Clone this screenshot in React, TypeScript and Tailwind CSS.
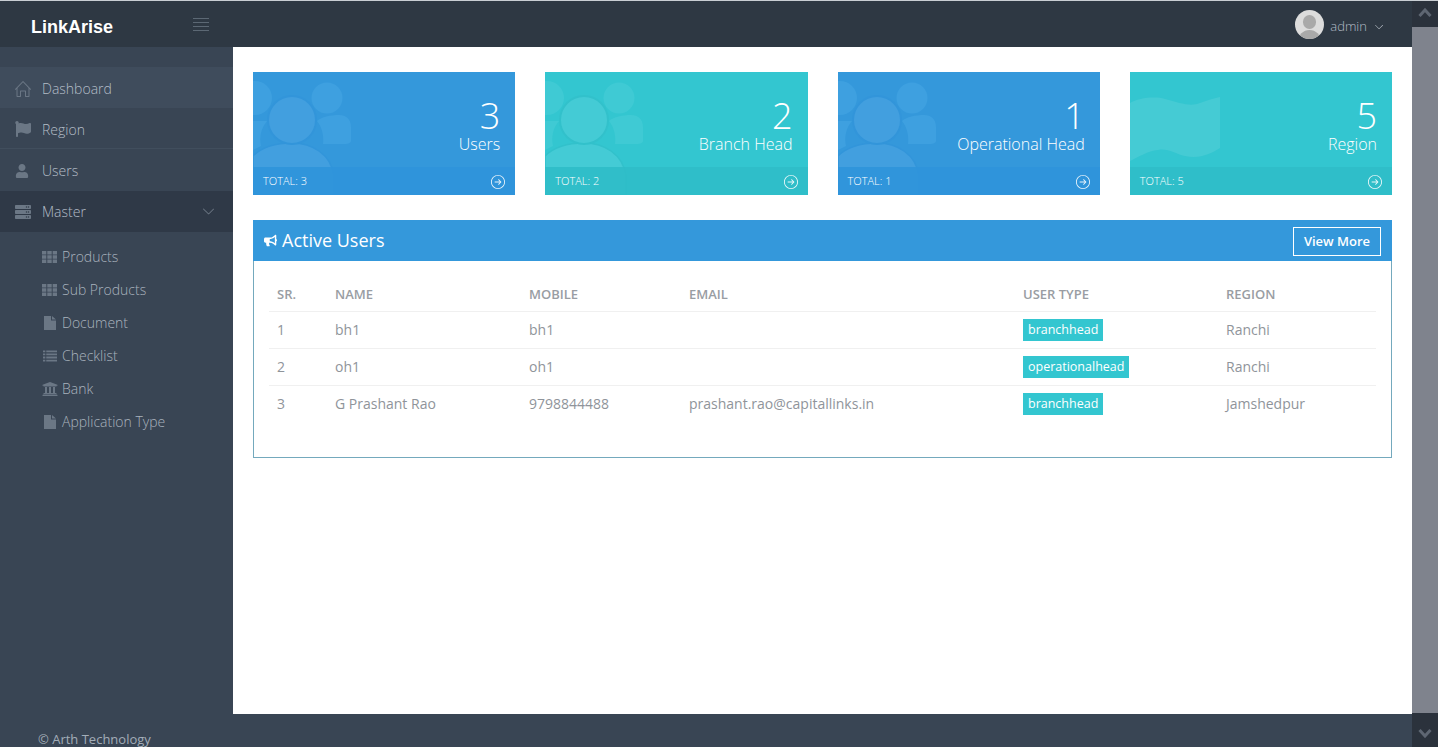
import React from "react";
import { FaFlag, FaUser, FaServer, FaUniversity, FaBullhorn } from "react-icons/fa";
import { SlHome, SlArrowDown, SlArrowRightCircle } from "react-icons/sl";

const font = "font-['Open_Sans',sans-serif]";

function UsersBg({ blue }: { blue?: boolean }) {
  const ring = blue ? "#3295da" : "#32c1cb";
  const head = blue ? "#429fdf" : "#44cbd5";
  const side = blue ? "#3ea0e0" : "#3fcad4";
  return (
    <svg viewBox="0 0 100 123" className="absolute left-0 top-0 h-[123px] w-[100px]">
      <g fill={side}>
        <circle cx="74" cy="26" r="15.500" />
        <circle cx="2" cy="26" r="17" />
        <path d="M64 49c4-4 14-6 22-6 7 0 12 4 12 12v14c0 2-3 3-6 3H70c1-8-1-17-6-23z" />
        <path d="M0 49h14c-6 7-8 16-6 25l-8 4z" />
      </g>
      <path d="M0 84c8-8 22-13 39-13 20 0 39 11 42 33v19H0z" fill={head} stroke={ring} strokeWidth="1.500" />
      <circle cx="39" cy="48" r="24" fill={head} stroke={ring} strokeWidth="2" />
    </svg>
  );
}

function FlagBg() {
  return (
    <svg viewBox="0 0 100 123" className="absolute left-0 top-0 h-[123px] w-[100px]" fill="#ffffff">
      <path opacity="0.09" d="M0 31C8 26 25 24 35 27c15 4 25 8 35 4 8-3 15-5 20-6v51c-10 6-20 11-35 8-10-2-17-8-27-6C18 79 8 85 0 89z" />
    </svg>
  );
}

function Card({ n, label, blue, flag }: { n: number; label: string; blue?: boolean; flag?: boolean }) {
  return (
    <div className={`relative h-[123px] overflow-hidden text-white ${blue ? "bg-[#3498db]" : "bg-[#33c6d0]"}`}>
      {flag ? <FlagBg /> : <UsersBg blue={blue} />}
      <div className="relative flex h-[95px] flex-col items-end pr-[15px] pt-[24px]">
        <div className="text-[36px] font-light leading-[40px]">{n}</div>
        <div className="text-[16px] font-light leading-[16px]">{label}</div>
      </div>
      <div className={`relative flex h-[28px] items-center justify-between pl-[10px] pr-[10px] pt-[1px] ${blue ? "bg-[#2f93da]/90" : "bg-[#2fbcc8]/90"}`}>
        <span className="text-[11px] font-light">TOTAL: {n}</span>
        <SlArrowRightCircle className="text-[14px] opacity-90" />
      </div>
    </div>
  );
}

function NavItem({ icon, label, cls, chev }: { icon: React.ReactNode; label: string; cls?: string; chev?: boolean }) {
  return (
    <div className={`flex h-[41px] items-center pl-[15px] pr-[19px] text-[14px] font-light text-[#b4bdc7] ${cls ?? ""}`}>
      <span className="flex w-[27px] items-center text-[16px] text-[#6b7785]">{icon}</span>
      <span className="flex-1">{label}</span>
      {chev && <SlArrowDown className="text-[11px] text-[#77828f]" />}
    </div>
  );
}

function SubItem({ icon, label }: { icon: React.ReactNode; label: string }) {
  return (
    <div className="flex h-[33px] items-center pl-[42px] text-[14px] font-light text-[#a9b3be]">
      <span className="flex w-[20px] items-center text-[15px] text-[#6b7785]">{icon}</span>
      <span>{label}</span>
    </div>
  );
}

function GridIcon() {
  return (
    <svg viewBox="0 0 15 12" className="h-[12px] w-[15px]" fill="currentColor">
      <path d="M0 0h4.300v3.400H0zM5.300 0h4.400v3.400H5.300zM10.700 0H15v3.400h-4.300zM0 4.300h4.300v3.400H0zM5.300 4.300h4.400v3.400H5.300zM10.700 4.300H15v3.400h-4.300zM0 8.600h4.300V12H0zM5.300 8.600h4.400V12H5.300zM10.700 8.600H15V12h-4.300z" />
    </svg>
  );
}

function DocIcon() {
  return (
    <svg viewBox="0 0 12 14" className="ml-[2px] h-[14px] w-[12px]" fill="currentColor">
      <path d="M0 0h7v4.500h5V14H0zM8 0l4 3.500H8z" />
    </svg>
  );
}

function ListIcon() {
  return (
    <svg viewBox="0 0 15 12" className="ml-px h-[12px] w-[14px]" fill="currentColor">
      <path d="M0 0h2.500v2H0zM3.500 0H15v2H3.500zM0 3.300h2.500v2H0zM3.500 3.300H15v2H3.500zM0 6.600h2.500v2H0zM3.500 6.600H15v2H3.500zM0 9.900h2.500v2H0zM3.500 9.900H15v2H3.500z" />
    </svg>
  );
}

const rows = [
  ["1", "bh1", "bh1", "", "branchhead", "Ranchi"],
  ["2", "oh1", "oh1", "", "operationalhead", "Ranchi"],
  ["3", "G Prashant Rao", "9798844488", "prashant.rao@capitallinks.in", "branchhead", "Jamshedpur"],
];

export default function App() {
  return (
    <div className={`${font} flex h-[747px] w-[1443px] overflow-hidden bg-white`}>
      <div className="flex h-full w-[1412px] flex-col border-t border-[#c9ced3] bg-[#394554]">
        <header className="flex h-[46px] shrink-0 items-center bg-[#2e3843]">
          <div className="flex w-[233px] items-center pl-[31px] pt-[6px]">
            <span className="font-['Liberation_Sans',sans-serif] text-[18px] font-bold text-white">LinkArise</span>
            <svg viewBox="0 0 16 14" className="ml-[80px] mt-[-4px] h-[14px] w-[16px]" stroke="#5c6874" strokeWidth="1" fill="none">
              <path d="M0 .5h16M0 4.500h16M0 8.500h16M0 12.500h16" />
            </svg>
          </div>
          <div className="flex flex-1 items-center justify-end pr-[29px]">
            <span className="relative h-[29px] w-[29px] overflow-hidden rounded-full bg-[#dcdcdc]">
              <span className="absolute left-[8px] top-[5px] h-[14px] w-[13px] rounded-full bg-[#a9a9a9]" />
              <span className="absolute left-[3px] top-[20px] h-[14px] w-[23px] rounded-t-full bg-[#a9a9a9]" />
            </span>
            <span className="ml-[6px] pt-[6px] text-[13px] font-light text-[#b4bdc7]">admin</span>
            <SlArrowDown className="ml-[8px] mt-[6px] text-[8px] text-[#c3cad1]" />
          </div>
        </header>
        <div className="flex min-h-0 flex-1">
          <aside className="w-[233px] shrink-0 pt-[20px]">
            <NavItem icon={<SlHome />} label="Dashboard" cls="bg-[#3f4c5c] pt-[2px]" />
            <NavItem icon={<FaFlag />} label="Region" cls="pt-[2px] border-b border-[#414e5d]" />
            <NavItem icon={<FaUser className="text-[14px]" />} label="Users" cls="pt-[2px]" />
            <NavItem icon={<FaServer />} label="Master" cls="bg-[#2f3947] mt-px" chev />
            <div className="pt-[8px]">
              <SubItem icon={<GridIcon />} label="Products" />
              <SubItem icon={<GridIcon />} label="Sub Products" />
              <SubItem icon={<DocIcon />} label="Document" />
              <SubItem icon={<ListIcon />} label="Checklist" />
              <SubItem icon={<FaUniversity className="text-[16px]" />} label="Bank" />
              <SubItem icon={<DocIcon />} label="Application Type" />
            </div>
          </aside>
          <main className="flex-1 bg-white px-[20px] pt-[25px]">
            <div className="grid grid-cols-4 gap-x-[30px]">
              <Card n={3} label="Users" blue />
              <Card n={2} label="Branch Head" />
              <Card n={1} label="Operational Head" blue />
              <Card n={5} label="Region" flag />
            </div>
            <section className="mt-[25px] h-[238px] border border-[#74a9bd]">
              <div className="-mx-px -mt-px flex h-[41px] items-center justify-between bg-[#3498db] pl-[11px] pr-[11px] text-white">
                <div className="flex items-center text-[18px]">
                  <FaBullhorn className="mr-[5px] text-[13px]" />
                  Active Users
                </div>
                <button className="mt-[2px] flex h-[29px] w-[88px] items-center justify-center border border-white text-[13px] font-semibold">View More</button>
              </div>
              <div className="px-[15px] pt-[16px]">
                <table className="w-full table-fixed border-collapse text-[14px] text-[#8f949a]">
                  <colgroup>
                    <col className="w-[58px]" />
                    <col className="w-[194px]" />
                    <col className="w-[160px]" />
                    <col className="w-[334px]" />
                    <col className="w-[203px]" />
                    <col />
                  </colgroup>
                  <thead>
                    <tr className="h-[34px] border-b border-[#f0f0f0] text-left text-[13px]">
                      {["SR.", "NAME", "MOBILE", "EMAIL", "USER TYPE", "REGION"].map((h) => (
                        <th key={h} className="px-[8px] pt-[2px] font-semibold text-[#999da3]">{h}</th>
                      ))}
                    </tr>
                  </thead>
                  <tbody>
                    {rows.map((r) => (
                      <tr key={r[0]} className="h-[37px] border-b border-[#f0f0f0] last:border-b-0">
                        {r.map((c, i) => (
                          <td key={i} className={i === 4 ? "px-[8px] pt-[7px] align-top" : "px-[8px]"}>
                            {i === 4 ? (
                              <span className="flex h-[22px] w-fit items-center bg-[#33c6d0] px-[5px] pt-[2px] text-[12.500px] text-white">{c}</span>
                            ) : c}
                          </td>
                        ))}
                      </tr>
                    ))}
                  </tbody>
                </table>
              </div>
            </section>
          </main>
        </div>
        <footer className="h-[33px] shrink-0 pl-[38px] pt-[16px] text-[13px] leading-[18px] text-[#a3adb8]">© Arth Technology</footer>
      </div>
      <div className="flex h-full w-[26px] flex-col bg-[#7f838d]">
        <div className="flex h-[27px] items-start justify-center border-t border-[#c9ced3] bg-[#2b323c] pt-[7px]">
          <svg viewBox="0 0 14 9" className="h-[9px] w-[14px]" fill="none" stroke="#5e6672" strokeWidth="3"><path d="M1.500 8 7 2l5.500 6" /></svg>
        </div>
        <div className="flex-1" />
        <div className="flex h-[34px] items-center justify-center bg-[#2b323c] pt-[6px]">
          <svg viewBox="0 0 14 9" className="h-[9px] w-[14px]" fill="none" stroke="#5e6672" strokeWidth="3"><path d="M1.500 1 7 7l5.500-6" /></svg>
        </div>
      </div>
    </div>
  );
}
